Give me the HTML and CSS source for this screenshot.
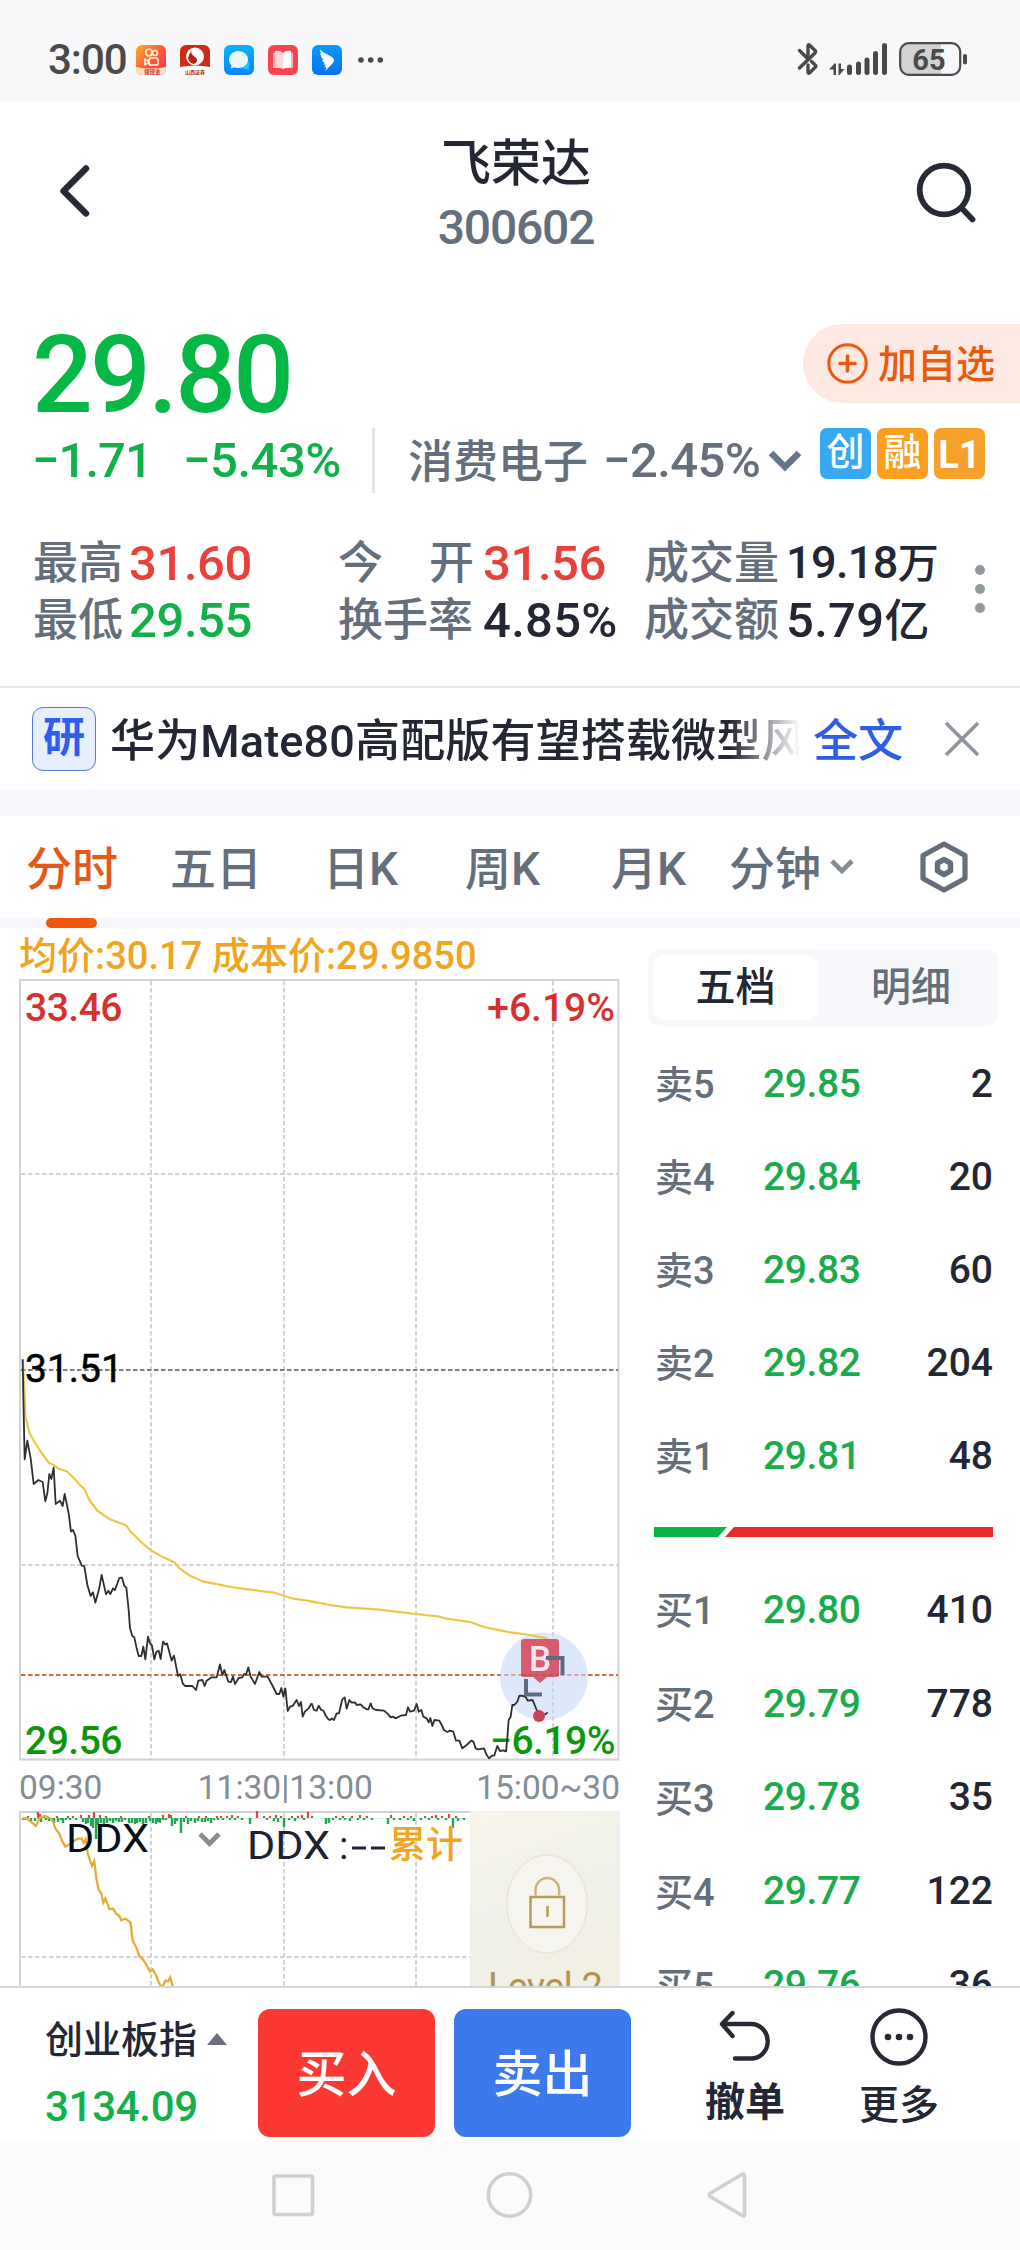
FILE: index.html
```html
<!DOCTYPE html>
<html lang="zh-CN">
<head>
<meta charset="utf-8">
<title>飞荣达 300602</title>
<link rel="stylesheet" href="styles.css">
</head>
<body>
<div class="phone">
  <div class="status">
    <span class="clock">3:00</span>
    <div class="apps">
      <svg width="30" height="30" viewBox="0 0 30 30"><defs><linearGradient id="ks" x1="0" y1="0" x2="1" y2="1"><stop offset="0" stop-color="#fdb02c"/><stop offset=".5" stop-color="#ff5a3a"/><stop offset="1" stop-color="#ff2b52"/></linearGradient></defs><rect width="30" height="30" rx="6" fill="url(#ks)"/><path d="M0 22q15 3 30 0v2a6 6 0 0 1-6 6H6a6 6 0 0 1-6-6z" fill="#fde3c0"/><g fill="none" stroke="#fff0d8" stroke-width="1.700"><circle cx="13" cy="7.500" r="3.300"/><circle cx="19" cy="8" r="2.500"/><rect x="13" y="13" width="9" height="7" rx="2"/><path d="M13 16.500l-4-2v5l4-2"/></g><text x="8" y="28.500" font-size="5.500" font-weight="700" fill="#c5301c">领现金</text></svg>
      <svg width="30" height="30" viewBox="0 0 30 30"><rect width="30" height="30" rx="6" fill="#fff"/><path d="M6 0h18a6 6 0 0 1 6 6v16q-15-3-30 0V6a6 6 0 0 1 6-6z" fill="#cf2a16"/><circle cx="15" cy="11.500" r="9" fill="#fff"/><path d="M14 3c-5 4-2 7 1 9s3 5-1 7c-5-1-7-5-5-9s4-6 5-7z" fill="#b82316"/><path d="M14 4.500c-2.500 3.500 0 5 2.500 7s2.500 5-.5 7.500" fill="none" stroke="#fff" stroke-width="1.300"/><text x="5" y="28.600" font-size="5" font-weight="700" fill="#9c2b22">山西证券</text></svg>
      <svg width="30" height="30" viewBox="0 0 30 30"><defs><linearGradient id="bl" x1="0" y1="0" x2="0" y2="1"><stop offset="0" stop-color="#08b2ff"/><stop offset="1" stop-color="#0a84fb"/></linearGradient></defs><rect width="30" height="30" rx="6" fill="url(#bl)"/><circle cx="21" cy="19.500" r="4.500" fill="#14c8fb"/><path d="M22 24l3 1-1-4z" fill="#14c8fb"/><path d="M14.500 6c5.500 0 9.500 3.800 9.500 8.500s-4 8.500-9.500 8.500c-1.700 0-3-.3-4.300-.8L7 23.500l.5-3.200C5.800 19 5 17 5 14.500 5 9.800 9 6 14.500 6z" fill="#e9f5ff"/></svg>
      <svg width="30" height="30" viewBox="0 0 30 30"><rect width="30" height="30" rx="6" fill="#f7444f"/><path d="M5 8l3-1v15h14V7l3 1v15H5z" fill="#fbb0b3"/><path d="M7 6q5-1 8 2v16q-3-2-8-1.500z" fill="#fdd6d7"/><path d="M23 6q-5-1-8 2v16q3-2 8-1.500z" fill="#fff"/></svg>
      <svg width="30" height="30" viewBox="0 0 30 30"><defs><linearGradient id="dt" x1="0" y1="0" x2="0" y2="1"><stop offset="0" stop-color="#0a9bff"/><stop offset="1" stop-color="#0670f2"/></linearGradient></defs><rect width="30" height="30" rx="6" fill="url(#dt)"/><path d="M8 4.500c3 3.500 9 5 13 8.500 1.500 1.500 1.200 3-.2 5.200L16 23l-2.500 3 .8-4-2.300.2 2-2.200-3-1 2-1-3.500-2.500 2.300-.2C9 12.500 8.500 10 8.300 8l1.200.3C8.300 7 8 6 8 4.500z" fill="#fff"/></svg>
      <svg class="more-dots" width="26" height="6" viewBox="0 0 26 6"><g fill="#4b4a4a"><circle cx="3" cy="3" r="2.800"/><circle cx="12.700" cy="3" r="2.800"/><circle cx="22.300" cy="3" r="2.800"/></g></svg>
    </div>
    <div class="status-right">
      <svg width="170" height="36" viewBox="797 42 170 36"><g fill="none" stroke="#4b4a4a" stroke-width="3.400" stroke-linecap="round" stroke-linejoin="round"><path d="M799.500 50.500L808 59V45.500Q808.500 44 810 45.500L815.500 51Q816 52 815 53L799.500 68M808 65v7.500q.5 1.500 2 0l5.500-5.500q.8-1-.3-2L811.500 61.500"/></g><g fill="#4b4a4a"><path d="M829 69.500l5.500-6h1.500V75h-2.500v-5.500zM838.500 63.500h2.500V69h3.500l-5 6h-1z"/><rect x="847" y="64.500" width="5" height="10.500" rx="2.500"/><rect x="856" y="61.500" width="5" height="13.500" rx="2.500"/><rect x="864.500" y="57.500" width="5" height="17.500" rx="2.500"/><rect x="873" y="51" width="5" height="24" rx="2.500"/><rect x="882" y="43" width="5" height="32" rx="2.500"/><rect x="963" y="54" width="4" height="10.500" rx="2"/></g><path d="M908 44h33v30h-33a7 7 0 0 1-7-7V51a7 7 0 0 1 7-7z" fill="#d2d2d3"/><rect x="900.200" y="43.200" width="60" height="31.600" rx="8.500" fill="none" stroke="#4b4a4a" stroke-width="2.200"/><text x="929" y="69.500" text-anchor="middle" font-size="29" font-weight="700" fill="#4b4a4a">65</text></svg>
    </div>
  </div>

  <header class="header">
    <svg class="back" width="34" height="56" viewBox="0 0 34 56"><path d="M29 5.500L6.500 28 29 50.500" fill="none" stroke="#262a35" stroke-width="6.400" stroke-linecap="round" stroke-linejoin="round"/></svg>
    <div class="title"><h1>飞荣达</h1><p>300602</p></div>
    <svg class="search" width="62" height="62" viewBox="0 0 62 62"><g fill="none" stroke="#262a35" stroke-width="5.800" stroke-linecap="round"><circle cx="29" cy="29" r="24.300"/><path d="M47 47.500L57.500 58.500"/></g></svg>
  </header>

  <section class="quote">
    <div class="price-row">
      <strong class="price">29.80</strong>
      <div class="fav"><svg width="41" height="41" viewBox="0 0 41 41"><g fill="none" stroke="#e9590f" stroke-linecap="round"><circle cx="20.500" cy="20.500" r="18.700" stroke-width="3"/><path d="M20.500 13v15M13 20.500h15" stroke-width="3.600"/></g></svg><span>加自选</span></div>
    </div>
    <div class="change-row">
      <span class="chg green">−1.71</span><span class="pct green">−5.43%</span><i class="vsep"></i>
      <span class="sector">消费电子</span><span class="sector-pct">−2.45%</span>
      <svg class="chev" width="34" height="24" viewBox="0 0 34 24"><path d="M3 4l14 14L31 4" fill="none" stroke="#66758a" stroke-width="6.500"/></svg>
      <span class="tag blue">创</span><span class="tag">融</span><span class="tag l1">L1</span>
    </div>
    <div class="stats">
      <div class="stat-grid">
        <span class="lab">最高</span><b class="red">31.60</b><span class="lab spread"><i>今</i><i>开</i></span><b class="red">31.56</b><span class="lab">成交量</span><b class="small">19.18<em>万</em></b>
        <span class="lab">最低</span><b class="green">29.55</b><span class="lab">换手率</span><b class="wide">4.85%</b><span class="lab">成交额</span><b class="wide">5.79<em>亿</em></b>
      </div>
      <svg class="kebab" width="10" height="50" viewBox="0 0 10 50"><g fill="#8f999e"><circle cx="5" cy="6" r="5"/><circle cx="5" cy="25" r="5"/><circle cx="5" cy="44" r="5"/></g></svg>
    </div>
  </section>

  <section class="news">
    <span class="badge">研</span>
    <p>华为Mate80高配版有望搭载微型风</p>
    <a>全文</a>
    <svg width="36" height="36" viewBox="0 0 36 36"><path d="M2 2l32 32M34 2L2 34" stroke="#8d949b" stroke-width="3.600"/></svg>
  </section>

  <nav class="tabs">
    <span class="tab active">分时</span><span class="tab t2">五日</span><span class="tab t3">日K</span><span class="tab t4">周K</span><span class="tab t5">月K</span><span class="tab t6">分钟</span>
    <svg class="tab-chev" width="24" height="18" viewBox="0 0 24 18"><path d="M2 3l10 10L22 3" fill="none" stroke="#848c92" stroke-width="4.600"/></svg>
    <svg class="hex" width="50" height="54" viewBox="0 0 50 54"><g fill="none" stroke="#656f7c" stroke-linejoin="round"><path d="M25 4L46 15.500v23L25 50 4 38.500v-23z" stroke-width="5.200"/><path d="M25 19.500l6.500 3.700v7.600L25 34.500l-6.500-3.700v-7.600z" stroke-width="5.500"/></g></svg>
  </nav>
  <div class="band"><i></i></div>

  <main class="main">
    <div class="charts">
      <p class="legend">均价:30.17 成本价:29.9850</p>
      <svg class="chart" width="602" height="784" viewBox="19 978 602 784">
        <g fill="none" stroke="#d3d3d3" stroke-width="2">
          <path stroke-dasharray="4.500 2.500" d="M151 981V1759M284 981V1759M416 981V1759M553 981V1759M21 1174H618M21 1565H618"/>
          <rect x="20" y="980" width="598.500" height="779.500"/>
        </g>
        <path d="M21 1370H618" stroke="#7b7f86" stroke-width="2" stroke-dasharray="4.500 2.500"/>
        <path d="M21 1675H618" stroke="#c96f42" stroke-width="2.200" stroke-dasharray="4.500 2.500"/>
        <g font-size="39" font-weight="500" letter-spacing="-.5">
          <text x="25" y="1021" fill="#d8302f">33.46</text><text x="615" y="1021" text-anchor="end" letter-spacing="0" fill="#d8302f">+6.19%</text>
          <text x="25" y="1382" font-weight="400" letter-spacing="0" stroke="#000" stroke-width=".5" fill="#000">31.51</text>
          <text x="25" y="1754" fill="#0b960b">29.56</text><text x="615" y="1754" text-anchor="end" fill="#0b960b">−6.19%</text>
        </g>
        <circle cx="544" cy="1676.500" r="44" fill="#c8d8f8" fill-opacity=".58"/>
        <g fill="none" stroke-linejoin="round">
          <g stroke="#ebc748" stroke-width="6.400">
            <polyline transform="translate(0 1330) scale(.33333)" points="68,88 74,200 76,260 84,290 88,308 105,338 120,362 133,380 148,400 162,405 175,416 200,424 222,445 240,465 253,478 268,510 293,543 330,568 378,586 392,605 430,642 453,661 490,682 525,698 535,712 568,736 610,755 700,772 780,783 823,788 880,806 930,813 950,817"/>
            <polyline transform="translate(310 1530) scale(.33333)" points="0,215 20,217 60,225 110,232 200,238 318,252 390,260 410,266 480,276 530,293 600,307 660,315 700,323 713,325"/>
          </g>
          <g stroke="#2d2f33" stroke-width="5.400">
            <polyline transform="translate(0 1330) scale(.33333)" points="68,88 70,200 74,388 82,332 92,385 101,462 115,450 128,456 136,514 142,490 148,432 154,447 161,413 167,522 180,512 188,528 194,492 206,550 213,605 219,600 226,617 233,678 245,706 253,709 262,765 272,798 279,787 286,818 297,778 305,735 318,793 325,782 331,792 339,775 345,780 358,744 366,743 373,768 379,773 386,840 390,895 397,918 403,922 410,955 416,978 424,978 430,950 436,988 444,920 450,940 456,947 463,988 469,966 476,962 482,987 489,935 496,944 501,940 515,992 522,977 534,1038 541,1033 548,1060 555,1068 577,1068 588,1080 595,1052 607,1050 614,1068 620,1052 635,1042 650,1042 660,1003 667,1036 673,1020 685,1055 693,1056 699,1040 705,1062 716,1044 727,1042 733,1032 738,1034 745,1012 752,1040 765,1062 778,1026 785,1040 803,1040 818,1068 830,1092 838,1092 844,1074 850,1100 856,1075 863,1143 870,1130 878,1128 890,1110 897,1128 903,1116 908,1160 915,1144 925,1136 935,1120"/>
            <polyline transform="translate(310 1530) scale(.33333)" points="5,520 12,540 20,542 26,527 34,540 40,542 48,558 55,568 60,570 66,565 72,570 80,550 87,550 97,508 104,502 110,536 118,510 125,518 135,517 140,525 152,523 158,530 170,538 175,538 182,520 188,535 198,540 222,542 232,550 242,562 248,560 258,565 272,557 288,555 294,532 300,545 312,542 320,522 326,545 334,540 340,560 350,565 356,577 361,564 367,588 373,570 388,572 395,585 402,600 412,606 420,602 430,605 438,632 448,632 457,655 470,645 484,632 490,635 497,655 505,658 522,655 530,675 537,685 545,678 553,676 562,648 570,663 580,661 588,664 592,625 596,570 602,560 607,525 613,525 622,515 628,497 640,498 648,502 653,512 668,510 680,540 688,560 695,553 706,553 713,547"/>
          </g>
        </g>
        <circle cx="539" cy="1716" r="6" fill="#c94555"/>
        <path d="M524 1639h32q3 0 3 3v32q0 3-3 3h-9l-7 6-7-6h-9q-3 0-3-3v-32q0-3 3-3z" fill="#d75b70"/>
        <path d="M521 1675H559" stroke="#bd5548" stroke-width="2" stroke-dasharray="4.500 2.500"/>
        <text x="540" y="1671" text-anchor="middle" font-size="35" font-weight="500" fill="#f6e4f0">B</text>
        <path d="M546 1658h16.500v17M526 1679v15.500h16" fill="none" stroke="#5d6b82" stroke-width="4"/>
      </svg>
      <div class="times"><span>09:30</span><span class="mid">11:30|13:00</span><span>15:00~30</span></div>
      <div class="ddx">
        <svg width="451" height="176" viewBox="19 1811 451 176">
          <g fill="none" stroke="#d3d3d3" stroke-width="2"><path d="M470 1812H20V1990"/><path stroke-dasharray="4.500 2.500" d="M151 1813V1990M284 1813V1990M416 1813V1990M21 1957H470"/></g>
          <path d="M22 1818.500H468" stroke="#d9efe0" stroke-width="1"/>
          <path d="M23 1818v2M26 1818v2M31 1818v3M35 1818v3M39 1818v2M41 1818v4M46 1818v2M49 1818v3M52 1818v2M54 1818v5M58 1818v4M61 1818v2M63 1818v5M66 1818v2M70 1818v2M76 1818v2M83 1818v4M86 1818v6M88 1818v5M91 1818v8M93 1818v10M96 1818v21M98 1818v7M101 1818v5M104 1818v9M107 1818v5M110 1818v3M113 1818v5M116 1818v3M119 1818v4M122 1818v4M125 1818v2M129 1818v5M132 1818v5M135 1818v6M137 1818v5M140 1818v4M143 1818v6M146 1818v5M150 1818v3M153 1818v5M156 1818v6M158 1818v4M160 1818v5M163 1818v2M166 1818v2M172 1818v8M175 1818v6M177 1818v3M181 1818v15M184 1818v4M188 1818v6M191 1818v3M195 1818v5M198 1818v3M202 1818v4M205 1818v4M208 1818v3M211 1818v5M214 1818v2M218 1818v2M223 1818v2M230 1818v2M235 1818v2M242 1818v2M250 1818v6M267 1818v2M274 1818v3M278 1818v4M284 1818v9M289 1818v2M295 1818v3M304 1818v2M326 1818v6M329 1818v5M333 1818v2M340 1818v2M345 1818v2M350 1818v3M358 1818v2M364 1818v2M372 1818v2M388 1818v6M394 1818v2M400 1818v2M408 1818v2M414 1818v3M421 1818v2M429 1818v2M438 1818v2M446 1818v2M453 1818v10M458 1818v3M464 1818v2" stroke="#23a653" stroke-width="2.400" fill="none"/>
          <path d="M28 1818v-2M38 1818v-6M40 1818v-4M44 1818v-2M57 1818v-2M68 1818v-2M73 1818v-2M81 1818v-3M89 1818v-3M94 1818v-6M100 1818v-3M106 1818v-2M121 1818v-2M149 1818v-2M163 1818v-3M169 1818v-4M171 1818v-3M186 1818v-2M199 1818v-2M206 1818v-2M217 1818v-2M221 1818v-2M227 1818v-2M232 1818v-3M238 1818v-2M257 1818v-7M264 1818v-2M270 1818v-2M276 1818v-3M281 1818v-2M292 1818v-2M298 1818v-2M302 1818v-3M308 1818v-6M312 1818v-2M336 1818v-2M343 1818v-2M352 1818v-2M360 1818v-3M367 1818v-2M391 1818v-3M404 1818v-2M411 1818v-2M425 1818v-2M432 1818v-2M436 1818v-3M442 1818v-2M449 1818v-4M456 1818v-2" stroke="#d9493f" stroke-width="2.200" fill="none"/>
          <polyline transform="translate(0 1750) scale(.40816 .33333)" points="55,205 65,205 75,215 88,227 98,203 110,198 124,205 130,215 136,237 145,250 152,272 160,290 172,282 182,272 190,266 200,266 205,278 210,268 215,310 225,348 231,333 236,385 242,420 248,430 253,458 258,445 268,477 278,477 285,492 292,497 297,510 308,506 320,518 325,572 333,590 342,620 348,625 355,637 368,665 374,658 382,675 390,700 395,710 400,706 405,692 412,694 417,682 424,712" fill="none" stroke="#e8ac35" stroke-width="2.300" vector-effect="non-scaling-stroke"/>
          <g font-size="39" font-weight="400"><text x="66" y="1852" fill="#060f1c" textLength="83" lengthAdjust="spacingAndGlyphs">DDX</text><text x="247" y="1859" fill="#1d2130" textLength="83" lengthAdjust="spacingAndGlyphs">DDX</text><text x="339" y="1859" fill="#1d2130">:</text><text x="389" y="1858" font-size="37" font-weight="500" fill="#f0a51d">累计</text></g>
          <path d="M352 1848h14M371 1848h14" stroke="#1d2130" stroke-width="3.200"/>
          <path d="M200 1834l9.500 9.500L219 1834" fill="none" stroke="#868e95" stroke-width="4.800"/>
        </svg>
        <div class="lock">
          <svg width="150" height="100" viewBox="0 0 150 100"><ellipse cx="77" cy="50" rx="40" ry="49" fill="#f5f4ef" stroke="#ebe6d3" stroke-width="1.500"/><g fill="none" stroke="#bb9a58" stroke-width="2.500"><rect x="60.500" y="43" width="33.500" height="30"/><path d="M65.500 41.500V36a11.800 12 0 0 1 23.600 0v5.500" stroke="#cdb374"/><path d="M77.500 52v11"/></g></svg>
          <span>Level-2</span>
        </div>
      </div>
    </div>

    <aside class="book">
      <div class="seg"><span class="on">五档</span><span>明细</span></div>
      <ul class="sell">
        <li><span>卖5</span><b>29.85</b><em>2</em></li>
        <li><span>卖4</span><b>29.84</b><em>20</em></li>
        <li><span>卖3</span><b>29.83</b><em>60</em></li>
        <li><span>卖2</span><b>29.82</b><em>204</em></li>
        <li><span>卖1</span><b>29.81</b><em>48</em></li>
      </ul>
      <svg class="ratio" width="339" height="10" viewBox="0 0 339 10"><path d="M0 0h73l-9 10H0z" fill="#08b342"/><path d="M80 0h259v10H71z" fill="#ea2b2a"/></svg>
      <ul class="buy">
        <li><span>买1</span><b>29.80</b><em>410</em></li>
        <li><span>买2</span><b>29.79</b><em>778</em></li>
        <li><span>买3</span><b>29.78</b><em>35</em></li>
        <li><span>买4</span><b>29.77</b><em>122</em></li>
        <li><span>买5</span><b>29.76</b><em>36</em></li>
      </ul>
    </aside>
  </main>

  <footer class="actions">
    <div class="index"><p>创业板指<i></i></p><b>3134.09</b></div>
    <button class="btn buy-btn">买入</button>
    <button class="btn sell-btn">卖出</button>
    <div class="act revoke"><svg width="54" height="52" viewBox="0 0 54 52"><path d="M14.500 3L4 14l10.500 12M4 14h29a16.500 17 0 0 1 0 34.500H17" fill="none" stroke="#262a35" stroke-width="4.400" stroke-linecap="round" stroke-linejoin="round"/></svg><span>撤单</span></div>
    <div class="act more"><svg width="58" height="58" viewBox="0 0 58 58"><circle cx="29" cy="29" r="26.500" fill="none" stroke="#262a35" stroke-width="4.400"/><g fill="#262a35"><circle cx="18" cy="29" r="3.300"/><circle cx="29" cy="29" r="3.300"/><circle cx="40" cy="29" r="3.300"/></g></svg><span>更多</span></div>
  </footer>
  <div class="sysnav">
    <svg width="476" height="50" viewBox="272 2170 476 50"><g fill="none" stroke="#d0d0d0" stroke-width="3.600" stroke-linejoin="round"><rect x="274" y="2176" width="38.500" height="38.500" rx="1.500"/><circle cx="509.500" cy="2195" r="21.200"/><path d="M744.500 2174.500v41q-.8 1-2 .3L710 2196.500q-1.500-1.500 0-3L742.500 2174q1.200-.5 2 .5z"/></g></svg>
  </div>
</div>
</body>
</html>
```
FILE: styles.css
```css
* { box-sizing: border-box; margin: 0; padding: 0; }
body { background: #fff; }
i, em { font-style: normal; }
ul { list-style: none; }
svg { display: block; flex: none; }
svg text { font-family: Roboto, "Noto Sans CJK SC", sans-serif; }
.phone {
  width: 1020px; height: 2250px; overflow: hidden; display: flex; flex-direction: column;
  font-family: Roboto, "Noto Sans CJK SC", sans-serif; font-weight: 500; color: #232733; white-space: nowrap;
}
.phone > * { flex: none; }
.green { color: #12b04a; }
.red { color: #e8403a; }

.status { height: 102px; background: #f8f8fb; display: flex; align-items: center; padding: 18px 53px 0 48px; }
.clock { font-size: 42px; line-height: 48px; width: 88px; color: #4b4a4a; letter-spacing: -1px; }
.apps { display: flex; gap: 14px; align-items: center; }
.more-dots { margin-left: 2px; }
.status-right { margin-left: auto; }

.header { height: 198px; display: flex; justify-content: space-between; align-items: flex-start; padding: 33px 43px 0 57px; }
.back { margin-top: 28px; }
.search { margin-top: 26px; }
.title { text-align: center; margin-left: 26px; }
.title h1 { font-size: 50px; line-height: 58px; font-weight: 500; }
.title p { font-size: 48px; line-height: 56px; margin-top: 7px; color: #656f7c; letter-spacing: -1.2px; }

.quote { height: 386px; }
.price-row { height: 115px; display: flex; justify-content: space-between; padding: 20px 0 0 32px; }
.price { font-size: 107px; line-height: 106px; margin-top: 3px; font-weight: 500; letter-spacing: -2.7px; color: #05b745; }
.fav { width: 217px; height: 79px; margin-top: 4px; border-radius: 40px 0 0 40px; background: #fde9e1; display: flex; align-items: center; padding-left: 24px; gap: 10px; font-size: 39px; line-height: 75px; color: #e9590f; }
.fav span { margin-top: 3px; }
.change-row { height: 91px; display: flex; align-items: center; padding-left: 32px; font-size: 49px; }
.chg { width: 151px; letter-spacing: -1px; }
.pct { width: 189px; letter-spacing: -.5px; }
.vsep { width: 3px; height: 65px; background: #e2e5ec; }
.sector { margin-left: 33px; margin-top: -4px; width: 195px; font-size: 45px; color: #656f7c; }
.sector-pct { width: 165px; color: #656f7c; letter-spacing: -.6px; }
.chev { margin-right: 18px; }
.tag { width: 51px; height: 51px; margin-right: 6px; margin-top: -15px; border-radius: 7px; background: #fa9f20; color: #fff; font-size: 38px; line-height: 49px; text-align: center; }
.tag.blue { background: #36a9f2; }
.tag.l1 { background: #f5a12b; font-weight: 700; line-height: 54px; }
.stats { display: flex; padding: 29px 0 0 33px; }
.stat-grid { display: grid; grid-template-columns: 96px 209px 145px 161px 142px 183px; grid-auto-rows: 57px; align-items: center; }
.lab { font-size: 45px; line-height: 57px; color: #656f7c; }
.spread { display: flex; justify-content: space-between; width: 136px; }
.stat-grid b { font-size: 49px; line-height: 57px; font-weight: 500; letter-spacing: -.4px; }
.stat-grid b.wide { letter-spacing: .3px; }
.stat-grid b em { font-size: 45px; }
.stat-grid b.small { font-size: 45px; letter-spacing: -.6px; }
.stat-grid b.small em { font-size: 41px; }
.kebab { margin: 29px 0 0 1px; transform: translateX(5px); }

.news { height: 104px; border-top: 2px solid #e6e7ec; display: flex; align-items: center; padding: 0 0 4px 32px; font-size: 45px; }
.badge { width: 64px; height: 64px; margin-top: 4px; border: 1.500px solid #5878d2; border-radius: 11px; background: #e7eefe; color: #2f5fea; font-size: 42px; line-height: 59px; text-align: center; font-weight: 700; }
.news p { margin-left: 14px; width: 691px; overflow: hidden; letter-spacing: .15px; -webkit-mask-image: linear-gradient(90deg, #000 620px, transparent 690px); mask-image: linear-gradient(90deg, #000 620px, transparent 690px); }
.news a { margin-left: 12px; width: 131px; color: #2f5de4; }
.news svg { margin-top: 4px; }

.tabs { height: 128px; border-top: 26px solid #f7f8fb; display: flex; align-items: center; font-size: 46px; color: #656f7c; padding-left: 26px; }
.tab { width: 144px; margin-top: -4px; }
.tab.active { color: #e3591a; }
.t2 { width: 153px; } .t3 { width: 142px; } .t4 { width: 146px; } .t5 { width: 118px; } .t6 { width: 99px; }
.tab-chev { margin-left: 2px; }
.hex { margin-left: 65px; }
.band { height: 10px; background: #f7f8fb; padding-left: 46px; }
.band i { display: block; width: 51px; height: 10px; border-radius: 5px; background: #f0570c; }

.main { height: 1058px; display: flex; overflow: hidden; }
.charts { width: 648px; padding-left: 19px; }
.legend { height: 50px; line-height: 56px; font-size: 38px; letter-spacing: .05px; color: #eea51f; }
.times { width: 601px; height: 49px; line-height: 51px; display: flex; justify-content: space-between; font-size: 33.500px; font-weight: 400; color: #848d95; }
.times .mid { transform: translateX(-4px); }
.ddx { display: flex; }
.lock { width: 150px; height: 176px; overflow: hidden; background: linear-gradient(160deg, #f8f5ea, #eff0e9 50%, #f3efe2); padding-top: 43px; }
.lock span { display: block; margin-top: 12px; text-align: center; font-size: 38px; line-height: 42px; font-weight: 400; color: #b3934f; letter-spacing: -.8px; }

.book { width: 351px; padding-top: 21px; }
.seg { height: 77px; border-radius: 13px; background: #f7f8fb; padding: 6px; display: flex; font-size: 40px; line-height: 66px; text-align: center; color: #656f7c; }
.seg span { flex: 1; padding-left: 12px; }
.seg .on { flex: none; width: 163px; padding: 0; height: 65px; border-radius: 10px; background: #fff; color: #232733; }
.book ul { padding: 0 6px 0 7px; }
.book li { height: 93px; display: flex; align-items: center; font-size: 39px; }
.sell { margin-top: 11px; }
.book li span { width: 108px; margin-top: -4px; font-size: 38px; color: #656f7c; }
.book li b { font-weight: 500; color: #1bab4d; letter-spacing: -.4px; }
.book li em { margin-left: auto; }
.ratio { margin: 25px 0 0 6px; }
.buy { margin-top: 26px; }
.book .buy li { height: 93.800px; }

.actions { height: 154px; border-top: 2px solid #d3d6d9; display: flex; background: #fff; padding-left: 45px; }
.index { width: 213px; padding-top: 29px; }
.index p { font-size: 38px; line-height: 46px; display: flex; align-items: center; }
.index p i { margin-left: 10px; margin-top: -3px; border: 10px solid transparent; border-top: 0; border-bottom: 12px solid #66707f; }
.index b { display: block; margin-top: 20px; font-size: 42px; line-height: 48px; font-weight: 500; letter-spacing: -.3px; color: #12b04a; }
.btn { width: 177px; height: 128px; padding-top: 3px; margin: 21px 19px 0 0; border: 0; border-radius: 12px; color: #fff; font: 500 50px/122px Roboto, "Noto Sans CJK SC", sans-serif; }
.buy-btn { background: #fb3832; }
.sell-btn { background: #3c7aeb; }
.act { display: flex; flex-direction: column; align-items: center; width: 82px; font-size: 40px; line-height: 46px; }
.revoke { margin-left: 54px; padding-top: 22px; font-weight: 700; }
.revoke span { margin-top: 18px; }
.more { margin-left: 72px; padding-top: 20px; }
.more span { margin-top: 17px; }

.sysnav { height: 110px; background: #fbfbfb; padding: 30px 0 0 272px; }
```
